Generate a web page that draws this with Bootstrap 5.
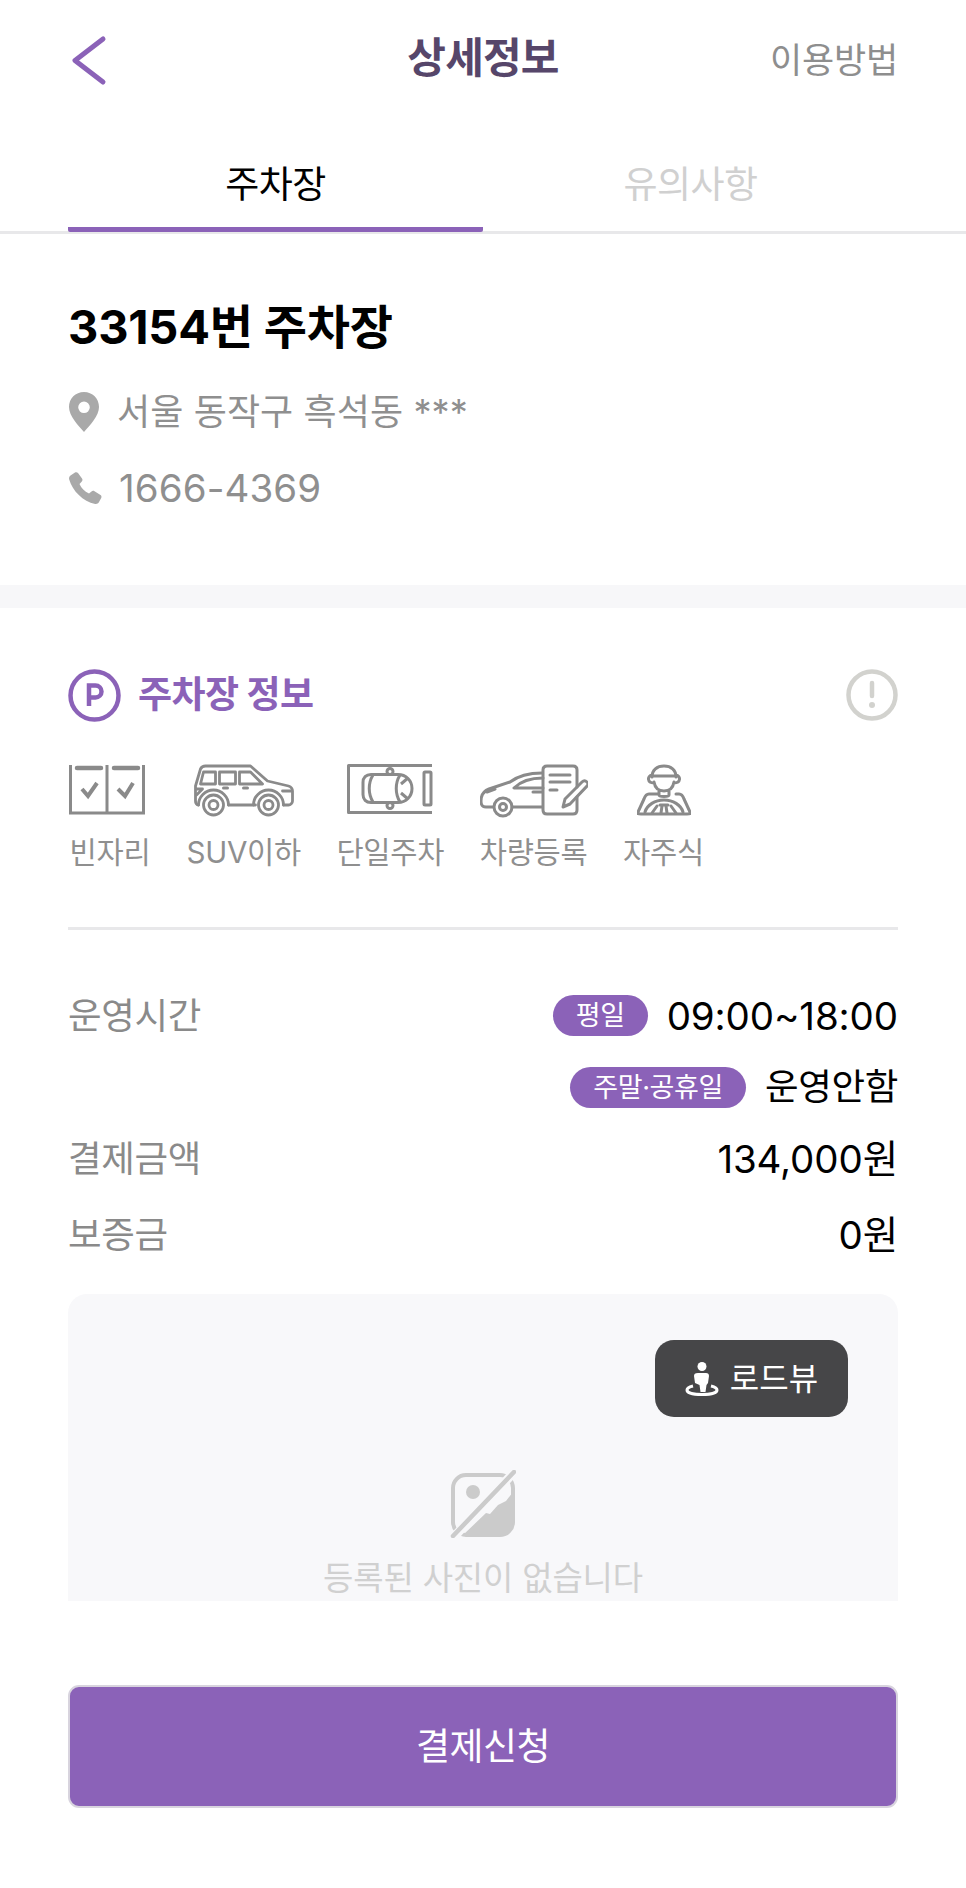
<!doctype html>
<html lang="ko"><head><meta charset="utf-8">
<link href="https://cdn.jsdelivr.net/npm/bootstrap@5.3.0/dist/css/bootstrap.min.css" rel="stylesheet">
<style>
html,body{background:#fff}
body{font-family:"Inter","Noto Sans CJK KR",sans-serif;color:#000;width:966px;height:1888px;overflow:hidden}
.topbar{height:120px;padding:0 68px;position:relative}
.back-ic{width:40px;height:54px;display:block}
.page-title{position:absolute;left:0;right:0;top:33px;text-align:center;font-size:42px;line-height:50px;font-weight:700;color:#56466a;letter-spacing:-.8px;margin:0}
.how-link{font-size:35px;line-height:50px;color:#8e8e8e;letter-spacing:-.2px}
.tabs-bar{height:114px;padding:0 68px;border-bottom:3px solid #e8e8ea}
.tab-one{width:416px;height:112px;font-size:37px;line-height:44px;padding-top:43px;text-align:center;letter-spacing:-.5px;color:#d0d0d0}
.tab-one.on{color:#000;border-bottom:5px solid #8b62b8;border-radius:0 0 2px 2px}
.head-sec{padding:0 68px;height:374px;border-bottom:23px solid #f7f7f9}
.lot-name{font-size:47px;line-height:56px;font-weight:700;margin:0;padding-top:65px;height:121px;letter-spacing:-.2px}
.addr{font-size:36px;line-height:44px;color:#8f8f8f;letter-spacing:.1px}
.addr-a{margin-top:35px;height:44px}
.addr-b{margin-top:32px;height:44px;font-size:38.500px}
.ic-pin{width:32px;height:42px;margin-right:17px}
.ic-phone{width:35px;height:35px;margin-right:16px}
.info-sec{padding:60px 68px 0}
.sec-title{height:54px}
.sec-name{font-size:37px;line-height:44px;font-weight:700;color:#8b62b8;letter-spacing:-.6px;margin:0 0 0 17px}
.feat-row{margin-top:42px;height:166px;border-bottom:3px solid #e8e8ea;gap:35.500px;padding-left:1px}
.feat-one{text-align:center}
.feat-one svg{display:block;margin:0 auto}
.feat-lbl{font-size:29.600px;line-height:38px;color:#8f8f8f;margin-top:15px;letter-spacing:-.3px;white-space:nowrap}
.rows-box{padding-top:50px}
.row-line{font-size:36.500px;line-height:46px}
.row-h71{height:71px}
.row-h72{height:72px}
.row-h80{height:80px}
.row-key{color:#8a8a8a;letter-spacing:-.3px}
.row-val{color:#000;letter-spacing:-.3px}
.row-num{font-size:38.500px;letter-spacing:-.1px}
.pill-tag{background:#8b62b8;color:#fff;font-size:27px;line-height:41px;height:41px;border-radius:21px;padding:0 23px;margin-right:19px;letter-spacing:-.4px}
.photo-box{margin-top:19px;height:307px;background:#f8f8fa;border-radius:19px 19px 0 0;position:relative;overflow:hidden;text-align:center}
.road-btn{position:absolute;right:50px;top:46px;width:193px;height:77px;background:#464648;border-radius:19px;color:#fff;font-size:32px;line-height:77px;border:0;padding:0;display:flex;align-items:center;justify-content:center;gap:11px}
.no-ic{position:absolute;left:382px;top:176px}
.no-txt{position:absolute;left:0;right:0;top:264px;font-size:33px;line-height:40px;color:#d0d0d0;letter-spacing:-.2px}
.foot-box{padding:84px 68px 0}
.pay-btn{width:830px;height:123px;background:#8b62b8;border:2px solid #d8d4de;border-radius:11px;color:#fff;font-size:37px;letter-spacing:-.5px}
.pay-btn:hover{background:#8b62b8;color:#fff}
</style></head><body>
<header class="topbar d-flex align-items-center justify-content-between">
<svg class="back-ic" viewBox="0 0 40 54" fill="none" stroke="#8b62b8" stroke-width="5" stroke-linecap="round" stroke-linejoin="round"><path d="M35 6 L7 27.500 L35 49"/></svg>
<h1 class="page-title">상세정보</h1>
<span class="how-link">이용방법</span>
</header>
<nav class="tabs-bar d-flex">
<div class="tab-one on">주차장</div><div class="tab-one">유의사항</div>
</nav>
<section class="head-sec">
<h2 class="lot-name">33154번 주차장</h2>
<div class="addr addr-a d-flex align-items-center">
<svg class="ic-pin" viewBox="0 0 32 42"><path fill="#a9a9a9" fill-rule="evenodd" d="M16 1C7.500 1 1 7.500 1 16c0 9 9 18 15 25 6-7 15-16 15-25C31 7.500 24.500 1 16 1zm0 9.500a5.800 5.800 0 1 1 0 11.600 5.800 5.800 0 0 1 0-11.600z"/></svg>서울 동작구 흑석동 ***</div>
<div class="addr addr-b d-flex align-items-center">
<svg class="ic-phone" viewBox="0 0 35 35"><path fill="#a9a9a9" d="M7 1.500c1-.6 2.200-.4 3 .5l4 5.500c.7 1 .6 2.200-.2 3l-2.300 2.400c1.800 4 5 7.500 9.500 9.700l2.500-2.200c.8-.7 2-.8 3-.2l6 3.800c1 .7 1.300 2 .7 3l-2.300 4.300c-.8 1.300-2.300 2-3.800 1.600C15 30.500 4.500 20 1.200 8.500 .8 7 1.300 5.500 2.500 4.500z"/></svg>1666-4369</div>
</section>
<section class="info-sec">
<div class="sec-title d-flex align-items-center">
<svg width="53" height="53" viewBox="0 0 53 53"><circle cx="26.500" cy="26.500" r="24" fill="none" stroke="#8b62b8" stroke-width="4.500"/><path fill="none" stroke="#8b62b8" stroke-width="4.500" d="M21 37V16.500h6.500a6 6 0 0 1 0 12H21"/></svg>
<h3 class="sec-name">주차장 정보</h3>
<svg class="ms-auto" width="52" height="52" viewBox="0 0 52 52"><circle cx="26" cy="26" r="23.500" fill="none" stroke="#d2d2ce" stroke-width="4.500"/><path stroke="#d2d2ce" stroke-width="4.500" stroke-linecap="round" d="M26 14v13"/><circle cx="26" cy="36" r="3" fill="#d2d2ce"/></svg>
</div>
<div class="feat-row d-flex">
<div class="feat-one">
<svg width="82" height="54" viewBox="0 0 82 54" fill="none" stroke="#8a8a8a" stroke-width="3"><path d="M1.500 1v48h73V1M38 1v48"/><path stroke-width="4.500" stroke-linecap="round" d="M8 4h24M45 4h24"/><path stroke-width="4" d="M13 25l6 7 9-13M49 25l7 7 8-13"/></svg>
<div class="feat-lbl">빈자리</div></div>
<div class="feat-one">
<svg width="100" height="54" viewBox="-1.500 -1 100 54" fill="none" stroke="#8a8a8a" stroke-width="2.800" stroke-linejoin="round" stroke-linecap="round"><path d="M3 40C1 40 0 38 0 36V21L5 4c1-2 3-3 5-3h45l17 15 21 5c3 1 4 3 4 5v10c0 2-2 4-4 4h-5M33 40h27"/><path d="M8 7h12v12H5zM24 7h16v12H24zM44 7h11l12 12H44zM1 24h6l-6 6M87 26h9"/><path d="M3 40a15 15 0 0 1 30 0M58 40a15 15 0 0 1 30 0"/><circle cx="18" cy="40" r="10"/><circle cx="18" cy="40" r="4.500"/><circle cx="73" cy="40" r="10"/><circle cx="73" cy="40" r="4.500"/><path stroke-width="3" d="M28 23h4M48 23h4"/></svg>
<div class="feat-lbl">SUV이하</div></div>
<div class="feat-one">
<svg width="86" height="54" viewBox="0 0 86 54" fill="none" stroke="#8a8a8a" stroke-width="3" stroke-linejoin="round"><path d="M85 1.500H1.500v47H85"/><rect x="77" y="8" width="7" height="33" rx="1"/><path d="M24 10.500h27c8 0 14 6 14 14s-6 14-14 14H24c-5 0-8-3-8-8v-12c0-5 3-8 8-8z"/><path d="M26 11c-5 8-5 19 0 27M53 11c-5 8-5 19 0 27M61 14l-7 6M61 35l-7-6"/><circle cx="43" cy="7.500" r="3"/><circle cx="43" cy="41.500" r="3"/></svg>
<div class="feat-lbl">단일주차</div></div>
<div class="feat-one">
<svg width="108" height="54" viewBox="0 0 108 54" fill="none" stroke="#8a8a8a" stroke-width="3" stroke-linejoin="round" stroke-linecap="round"><path d="M13 43H6c-4 0-5-2-5-6 0-6 3-10 8-12l21-7C38 12 48 9 62 9M32 43h30M63 14c-12 0-22 3-29 10h29M53 28h9M7 28l8-3"/><circle cx="23" cy="43" r="9"/><circle cx="23" cy="43" r="3.500"/><path d="M97 23V6c0-3-2-4-4-4H67c-3 0-4 2-4 4v40c0 3 2 4 4 4h26c2 0 4-1 4-4V33M70 11h20M70 18h20M70 26h7"/><path d="M83 43l2-8 17-17c2-2 4-1 5 0s1 3 0 4L90 40z"/></svg>
<div class="feat-lbl">차량등록</div></div>
<div class="feat-one">
<svg width="54" height="54" viewBox="0 0 54 54" fill="none" stroke="#8a8a8a" stroke-width="3" stroke-linejoin="round" stroke-linecap="round"><path d="M15 13c0-7 5-11 12-11s12 4 12 11M15 11c-5 1-5 8 2 8M39 11c5 1 5 8-2 8M15 12h24M17 18c1 6 5 9 10 9s9-3 10-9M22 27v4c0 2 10 2 10 0v-4M21 30h-9c-3 0-4 2-5 5L1 48c-.5 2 0 2 3 2h46c3 0 3.500 0 3-2l-6-13c-1-3-2-5-5-5h-3"/><path d="M8 48c2-7 10-12 19-12s17 5 19 12M23 41h8M15 49l5-7M39 49l-5-7M24 49l1-7M30 49l-1-7"/></svg>
<div class="feat-lbl">자주식</div></div>
</div>
<div class="rows-box">
<div class="row-line row-h71 d-flex align-items-center justify-content-between"><span class="row-key">운영시간</span><span class="d-flex align-items-center"><span class="pill-tag">평일</span><span class="row-val row-num">09:00~18:00</span></span></div>
<div class="row-line row-h72 d-flex align-items-center justify-content-end"><span class="pill-tag">주말·공휴일</span><span class="row-val">운영안함</span></div>
<div class="row-line row-h72 d-flex align-items-center justify-content-between"><span class="row-key">결제금액</span><span class="row-val row-num">134,000원</span></div>
<div class="row-line row-h80 d-flex align-items-center justify-content-between"><span class="row-key">보증금</span><span class="row-val row-num">0원</span></div>
</div>
<div class="photo-box">
<button class="road-btn" type="button"><svg width="34" height="34" viewBox="0 0 34 34"><circle cx="17" cy="4.500" r="4.500" fill="#fff"/><path fill="#fff" d="M13 11h8c2 0 3 1 3 3l-1 7-1.500 2-1 7h-5l-1-7L10 21l-1-7c0-2 1-3 4-3z"/><path fill="none" stroke="#fff" stroke-width="3" d="M8 24c-4 1-6 2-6 4 0 3 7 4.500 15 4.500S32 31 32 28c0-2-2-3-6-4"/></svg>로드뷰</button>
<svg class="no-ic" width="66" height="68" viewBox="0 0 66 68"><rect x="3" y="5" width="60" height="60" rx="13" fill="none" stroke="#cbcbcb" stroke-width="4"/><circle cx="23" cy="22" r="7" fill="#cbcbcb"/><path fill="#cbcbcb" d="M12 66L36 43l4 1 8-9 8-4 7-9v30c0 8-5 14-13 14z"/><path stroke="#f8f8fa" stroke-width="9" d="M2 69L66 0"/><path stroke="#cbcbcb" stroke-width="4.500" stroke-linecap="round" d="M3 66L64 2"/></svg>
<div class="no-txt">등록된 사진이 없습니다</div>
</div>
</section>
<div class="foot-box"><button class="btn pay-btn" type="button">결제신청</button></div>
<script src="https://cdn.jsdelivr.net/npm/bootstrap@5.3.0/dist/js/bootstrap.bundle.min.js"></script>
</body></html>
